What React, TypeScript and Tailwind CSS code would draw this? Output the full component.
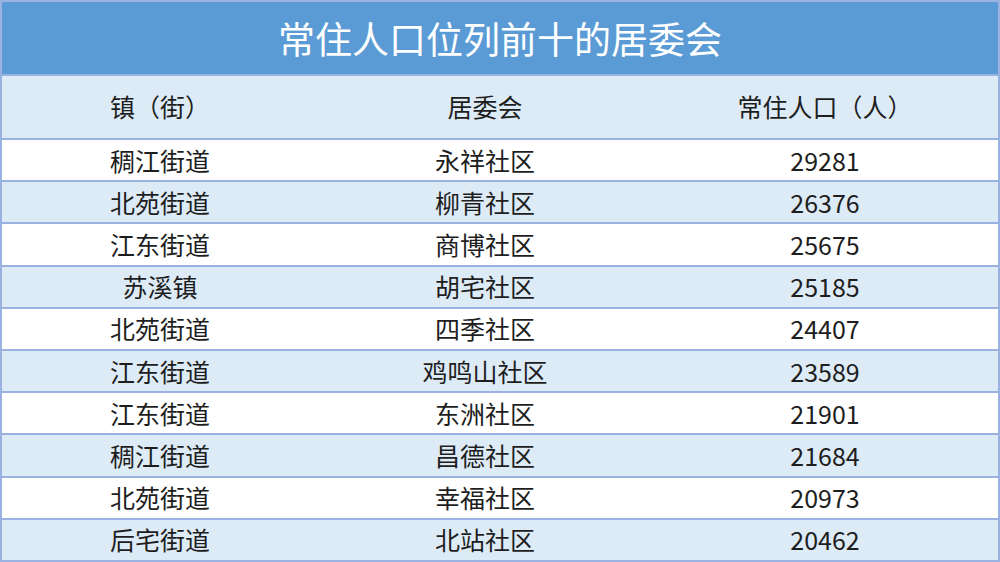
const rows: [string, string, string][] = [
  ['稠江街道', '永祥社区', '29281'],
  ['北苑街道', '柳青社区', '26376'],
  ['江东街道', '商博社区', '25675'],
  ['苏溪镇', '胡宅社区', '25185'],
  ['北苑街道', '四季社区', '24407'],
  ['江东街道', '鸡鸣山社区', '23589'],
  ['江东街道', '东洲社区', '21901'],
  ['稠江街道', '昌德社区', '21684'],
  ['北苑街道', '幸福社区', '20973'],
  ['后宅街道', '北站社区', '20462'],
];

const font = { fontFamily: '"Noto Sans CJK SC", "Noto Sans", sans-serif' };

export default function App() {
  return (
    <div className="w-[1000px] h-[562px] bg-white" style={font}>
      <div className="flex flex-col border-2 border-[#9ab2e2] h-full">
        <div className="h-[72px] bg-[#5b9bd5] flex items-center justify-center text-white text-[37px] leading-none">
          常住人口位列前十的居委会
        </div>
        <div className="h-[64px] border-t-2 border-[#9ab2e2] bg-[#ddebf7] grid grid-cols-[316px_334px_1fr] items-center text-[25px] text-[#1e1e1e]">
          <div className="text-center">镇（街）</div>
          <div className="text-center">居委会</div>
          <div className="text-center">常住人口（人）</div>
        </div>
        {rows.map((r, i) => (
          <div
            key={i}
            className={`flex-1 border-t-2 border-[#9ab2e2] grid grid-cols-[316px_334px_1fr] items-center text-[25px] text-[#1e1e1e] leading-none ${i % 2 === 0 ? 'bg-white' : 'bg-[#ddebf7]'}`}
          >
            <div className="text-center">{r[0]}</div>
            <div className="text-center">{r[1]}</div>
            <div className="text-center">{r[2]}</div>
          </div>
        ))}
      </div>
    </div>
  );
}
